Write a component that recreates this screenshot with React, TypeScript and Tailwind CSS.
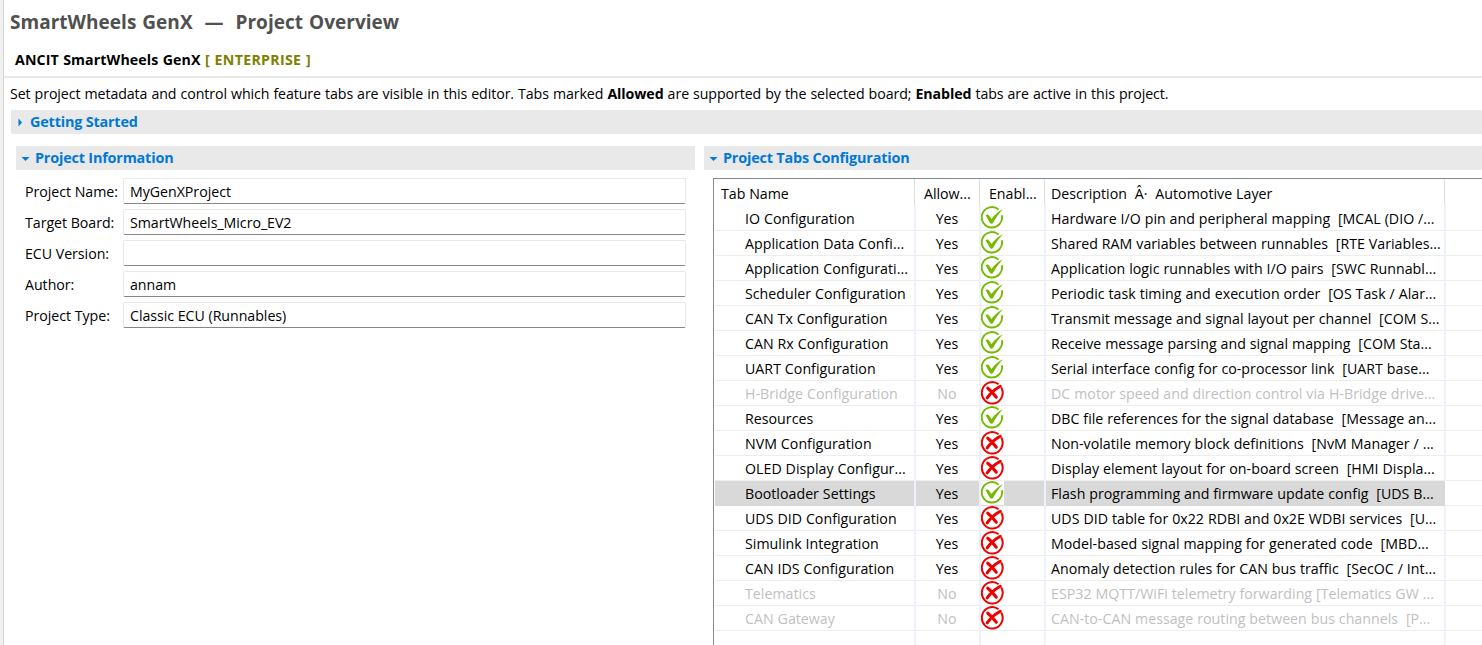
import clsx from 'clsx';

type TabRow = {
    name: string;
    allowed: boolean;
    enabled: boolean;
    description: string;
    selected?: boolean;
};

const fields = [
    { label: 'Project Name:', value: 'MyGenXProject' },
    { label: 'Target Board:', value: 'SmartWheels_Micro_EV2' },
    { label: 'ECU Version:', value: '' },
    { label: 'Author:', value: 'annam' },
    { label: 'Project Type:', value: 'Classic ECU (Runnables)' },
];

const rows: TabRow[] = [
    { name: 'IO Configuration', allowed: true, enabled: true, description: 'Hardware I/O pin and peripheral mapping  [MCAL (DIO /...' },
    { name: 'Application Data Confi...', allowed: true, enabled: true, description: 'Shared RAM variables between runnables  [RTE Variables...' },
    { name: 'Application Configurati...', allowed: true, enabled: true, description: 'Application logic runnables with I/O pairs  [SWC Runnabl...' },
    { name: 'Scheduler Configuration', allowed: true, enabled: true, description: 'Periodic task timing and execution order  [OS Task / Alar...' },
    { name: 'CAN Tx Configuration', allowed: true, enabled: true, description: 'Transmit message and signal layout per channel  [COM S...' },
    { name: 'CAN Rx Configuration', allowed: true, enabled: true, description: 'Receive message parsing and signal mapping  [COM Sta...' },
    { name: 'UART Configuration', allowed: true, enabled: true, description: 'Serial interface config for co-processor link  [UART base...' },
    { name: 'H-Bridge Configuration', allowed: false, enabled: false, description: 'DC motor speed and direction control via H-Bridge drive...' },
    { name: 'Resources', allowed: true, enabled: true, description: 'DBC file references for the signal database  [Message an...' },
    { name: 'NVM Configuration', allowed: true, enabled: false, description: 'Non-volatile memory block definitions  [NvM Manager / ...' },
    { name: 'OLED Display Configur...', allowed: true, enabled: false, description: 'Display element layout for on-board screen  [HMI Displa...' },
    { name: 'Bootloader Settings', allowed: true, enabled: true, description: 'Flash programming and firmware update config  [UDS B...', selected: true },
    { name: 'UDS DID Configuration', allowed: true, enabled: false, description: 'UDS DID table for 0x22 RDBI and 0x2E WDBI services  [U...' },
    { name: 'Simulink Integration', allowed: true, enabled: false, description: 'Model-based signal mapping for generated code  [MBD...' },
    { name: 'CAN IDS Configuration', allowed: true, enabled: false, description: 'Anomaly detection rules for CAN bus traffic  [SecOC / Int...' },
    { name: 'Telematics', allowed: false, enabled: false, description: 'ESP32 MQTT/WiFi telemetry forwarding [Telematics GW ...' },
    { name: 'CAN Gateway', allowed: false, enabled: false, description: 'CAN-to-CAN message routing between bus channels  [P...' },
];

const columns = 'grid grid-cols-[201px_65px_65px_400px_1fr]';

function EnabledIcon() {
    return (
        <svg className="h-6 w-[23px] bg-white" viewBox="0 0 23 24" fill="none" aria-hidden="true">
            <path d="M17.6 3.6A10.2 10.2 0 1 0 20.9 9.2" stroke="#76b900" strokeWidth="1.9" />
            <path d="M4.6 9.2c1.2-.9 2.500-.9 3.400.2l2.500 3.600C13.200 9.200 16.800 5.800 21.800 3.200 18 7.300 14.800 12 12 17c-.8 1.100-2.200 1.100-3 0z" fill="#76b900" />
        </svg>
    );
}

function DisabledIcon() {
    return (
        <svg className="h-6 w-[23px] bg-white" viewBox="0 0 23 24" fill="none" aria-hidden="true">
            <path d="M17.600 3.300A10.400 10.700 0 1 0 20.300 6.500" stroke="#ec0000" strokeWidth="2" />
            <path d="M6.800 7.200C9.500 9.300 13 13 15.200 16.200" stroke="#ec0000" strokeWidth="3.200" strokeLinecap="round" />
            <path d="M19.300 5.200C14.300 8 9.200 12.400 6.200 16.800" stroke="#ec0000" strokeWidth="3" strokeLinecap="round" />
        </svg>
    );
}

function SectionBar({ title, open, className }: { title: string; open?: boolean; className?: string }) {
    return (
        <div className={clsx('flex h-6 items-center bg-[#e9e9e9] text-[14.4px] leading-6 font-bold tracking-[-0.18px] text-[#0078d7]', className)}>
            <svg className="mx-[5px] h-[9px] w-[9px]" viewBox="0 0 9 9" fill="#0078d7" aria-hidden="true">
                {open ? <path d="M0.5 3h8l-4 4z" /> : <path d="M2.5 0.5v8l3.5-4z" />}
            </svg>
            {title}
        </div>
    );
}

function ProjectInformation() {
    return (
        <section className="w-[679px]">
            <SectionBar title="Project Information" open />
            <div className="mt-2 ml-[9px] flex flex-col gap-[5px]">
                {fields.map((field) => (
                    <label key={field.label} className="flex h-[26px]">
                        <span className="w-[98px] leading-[27px]">{field.label}</span>
                        <span className="w-[563px] rounded-[2px] border border-[#e8e8e8] border-b-[#868686] pl-1.5 leading-[25px]">
                            {field.value}
                        </span>
                    </label>
                ))}
            </div>
        </section>
    );
}

function TableRow({ row }: { row: TabRow }) {
    const fill = row.selected && 'bg-[#d9d9d9]';
    const line = 'border-r-2 border-[#edf1fa]';

    return (
        <div className={clsx(columns, 'h-[25px] border-b border-[#ededed] leading-[25px]', !row.allowed && 'text-[#bfbfbf]')}>
            <div className={clsx('pl-[30px]', line, fill)}>{row.name}</div>
            <div className={clsx('pr-px text-center', line, fill)}>{row.allowed ? 'Yes' : 'No'}</div>
            <div className={clsx(line, fill)}>{row.enabled ? <EnabledIcon /> : <DisabledIcon />}</div>
            <div className={clsx('pl-[5px]', row.selected ? 'mr-px' : line, fill)}>{row.description}</div>
            <div />
        </div>
    );
}

function ProjectTabs() {
    return (
        <section className="flex flex-1 flex-col">
            <SectionBar title="Project Tabs Configuration" open />
            <div className="mt-2 ml-[9px] flex flex-1 flex-col border-t border-l border-[#828790] pl-px tracking-[0.02px] [word-spacing:0.2px]">
                <div className={clsx(columns, 'h-[27px] leading-[29px] tracking-[-0.02px]')}>
                    <div className="mr-px border-r border-[#e0e0e0] pl-1.5">Tab Name</div>
                    <div className="mr-px border-r border-[#e0e0e0] pl-2">Allow...</div>
                    <div className="mr-px border-r border-[#e0e0e0] pl-2">Enabl...</div>
                    <div className="mr-px border-r border-[#e0e0e0] pl-[5px] tracking-[0.02px]">Description  Â·  Automotive Layer</div>
                </div>
                {rows.map((row) => (
                    <TableRow key={row.name} row={row} />
                ))}
                <div className={clsx(columns, 'flex-1')}>
                    {[0, 1, 2, 3].map((column) => (
                        <div key={column} className="border-r-2 border-[#edf1fa]" />
                    ))}
                </div>
            </div>
        </section>
    );
}

export default function App() {
    return (
        <div className="flex h-[645px] w-[1482px] overflow-hidden bg-white font-['Open_Sans','Noto_Sans',sans-serif] text-[14.2px] tracking-[-0.03px] whitespace-pre text-black">
            <div className="w-1 shrink-0 border-r border-[#d6d6d6] bg-[#f0f0f0]" />
            <main className="flex min-w-0 flex-1 flex-col">
                <header className="h-[78px] shrink-0 border-b-2 border-[#e9e9e9]">
                    <h1 className="pt-2 pl-1.5 text-[19px] leading-7 font-bold tracking-[0.03px] text-[#505050] [word-spacing:1px]">
                        SmartWheels GenX  —  Project Overview
                    </h1>
                    <p className="mt-3 pl-[11px] leading-6 font-bold tracking-[0.1px] [word-spacing:0.6px]">
                        ANCIT SmartWheels GenX <span className="tracking-[0.3px] text-[#808000]">[ ENTERPRISE ]</span>
                    </p>
                </header>
                <p className="h-8 shrink-0 pl-1.5 leading-8 tracking-[-0.08px] [word-spacing:0.43px]">
                    Set project metadata and control which feature tabs are visible in this editor. Tabs marked <b>Allowed</b> are supported by the selected board; <b>Enabled</b> tabs are active in this project.
                </p>
                <SectionBar title="Getting Started" className="ml-[7px] shrink-0" />
                <div className="mt-3 ml-3 flex flex-1 gap-[9px]">
                    <ProjectInformation />
                    <ProjectTabs />
                </div>
            </main>
        </div>
    );
}
